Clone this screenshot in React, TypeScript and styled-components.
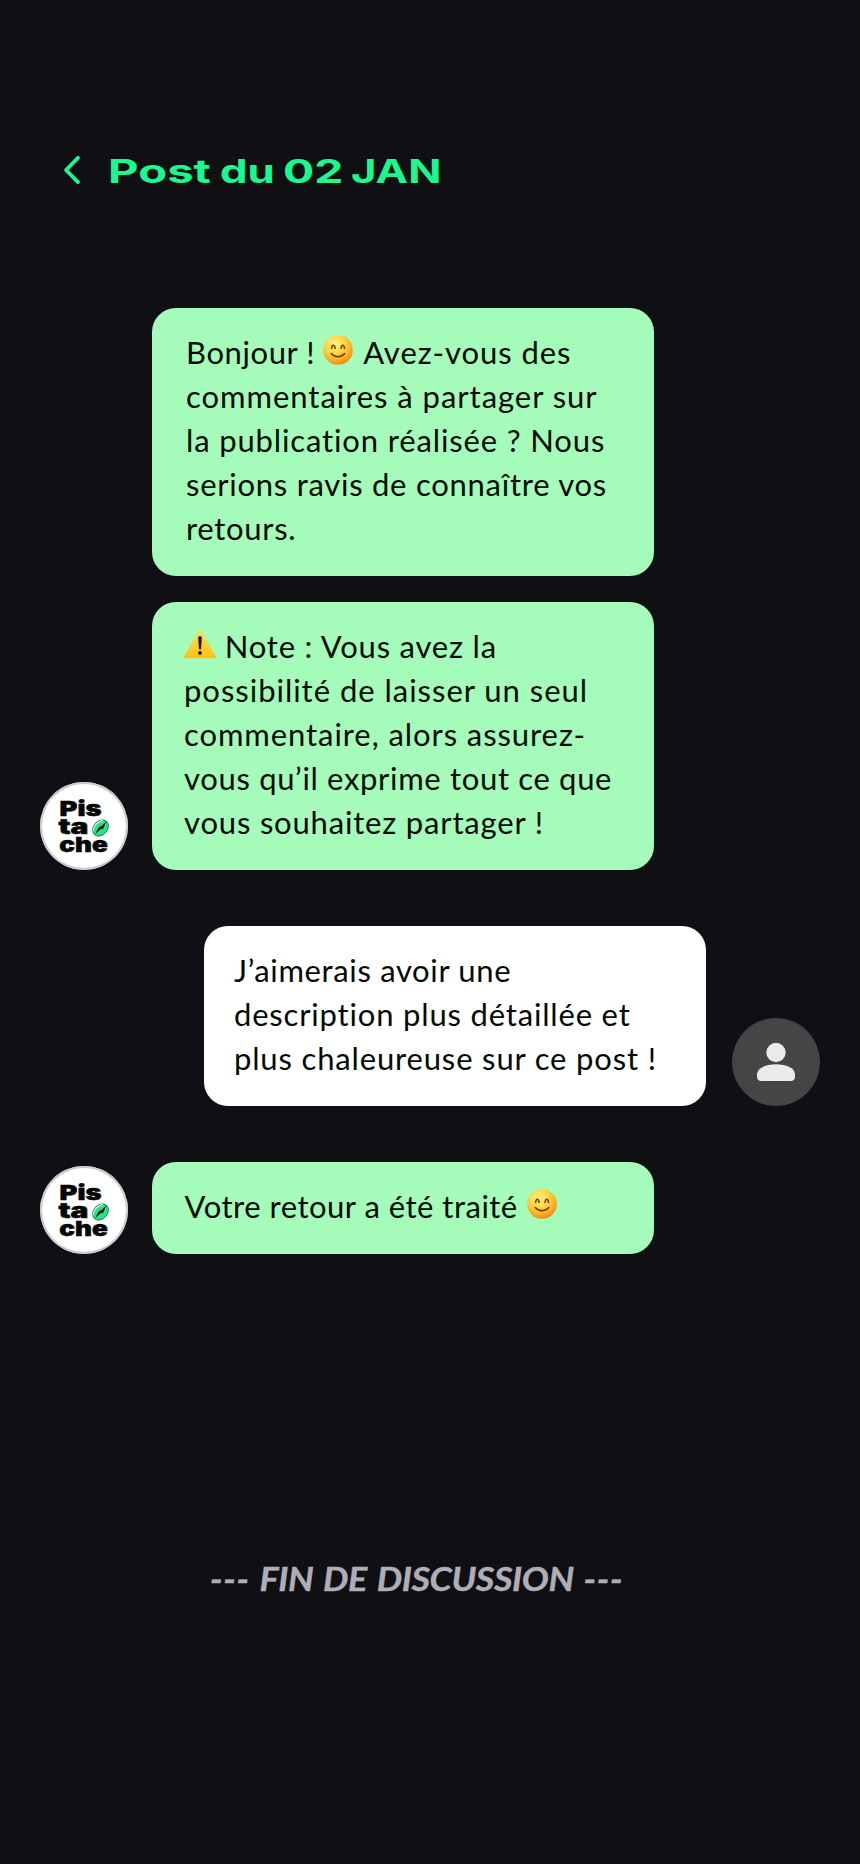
import React from "react";
import styled, { createGlobalStyle } from "styled-components";

const GlobalStyle = createGlobalStyle`
  *, *::before, *::after { box-sizing: border-box; }
  body { margin: 0; background: #100f14; }
`;

const Page = styled.main`
  width: 860px;
  height: 1864px;
  padding: 148px 40px 0;
  display: flex;
  flex-direction: column;
  background: #100f14;
  color: #020a04;
  font-family: Lato, "Noto Sans", sans-serif;
`;

const Header = styled.header`
  display: flex;
  align-items: center;
  height: 44px;
  padding-left: 22px;
  margin-bottom: 116px;
`;

const BackButton = styled.button`
  width: 20px;
  height: 32px;
  margin-right: 25.5px;
  padding: 0;
  border: 0;
  background: none;
  display: flex;
`;

const Title = styled.h1`
  display: flex;
  margin: 0;
  padding-top: 1px;
  color: #19f98f;
  font: 700 33px/44px Inter, sans-serif;
  white-space: pre;
`;

const Word = styled.span<{ $width: number; $stretch: number }>`
  width: ${(p) => p.$width}px;
  transform: scaleX(${(p) => p.$stretch});
  transform-origin: 0 50%;
`;

const Thread = styled.section`
  display: flex;
  flex-direction: column;
`;

const Row = styled.div<{ $mine?: boolean; $gap: number }>`
  display: flex;
  align-items: flex-end;
  justify-content: ${(p) => (p.$mine ? "flex-end" : "flex-start")};
  gap: ${(p) => (p.$mine ? 26 : 24)}px;
  margin-bottom: ${(p) => p.$gap}px;
`;

const AvatarSlot = styled.div`
  width: 88px;
  flex: none;
`;

const Avatar = styled.div<{ $user?: boolean }>`
  width: 88px;
  height: 88px;
  border-radius: 50%;
  overflow: hidden;
  background: ${(p) => (p.$user ? "#454547" : "#ffffff")};
  box-shadow: ${(p) => (p.$user ? "none" : "inset 0 0 0 2px #cbcbcd")};
`;

const Bubble = styled.div<{ $mine?: boolean; $inset: number }>`
  width: 502px;
  padding: 22px 0 26px ${(p) => p.$inset}px;
  border-radius: 24px;
  background: ${(p) => (p.$mine ? "#ffffff" : "#a4fbba")};
`;

const Line = styled.div`
  height: 44px;
  font-size: 31px;
  line-height: 44px;
  white-space: pre;
`;

const Run = styled.span<{ $track: number }>`
  letter-spacing: ${(p) => p.$track}px;
`;

const Glyph = styled.svg<{ $left?: number; $right?: number }>`
  display: inline-block;
  vertical-align: -1px;
  margin: 0 ${(p) => p.$right ?? 0}px 0 ${(p) => p.$left ?? 0}px;
`;

const Ending = styled.p`
  margin: 303px 0 0;
  padding-left: 169.5px;
  color: #afadb6;
  font: italic bold 31.5px/44px Lato, sans-serif;
  white-space: pre;
`;

const Stretched = styled.span`
  display: inline-block;
  transform: scaleX(1.14);
  transform-origin: 0 50%;
  word-spacing: 2px;
  letter-spacing: -0.35px;
  -webkit-text-stroke: 0.4px currentColor;
`;

const Dashes = styled.span`
  letter-spacing: 0.7px;
`;

function Smile({ id, left, right }: { id: string; left?: number; right?: number }) {
  return (
    <Glyph $left={left} $right={right} width="30" height="30" viewBox="0 0 30 30">
      <defs>
        <radialGradient id={id} cx="0.4" cy="0.3" r="0.72">
          <stop offset="0" stopColor="#fff07a" />
          <stop offset="0.4" stopColor="#ffdb4a" />
          <stop offset="0.75" stopColor="#ffb022" />
          <stop offset="1" stopColor="#f0861a" />
        </radialGradient>
      </defs>
      <circle cx="15" cy="15" r="14.8" fill={`url(#${id})`} />
      <g fill="none" stroke="#6f3b06" strokeLinecap="round" strokeWidth="1.6">
        <path d="M8.6 13.4c.5-4.2 2.9-4.2 3.5 0M18 13.4c.6-4.2 3-4.2 3.5 0" />
        <path d="M8.3 18.6c3.2 4.200 10.200 4.200 13.400 0" />
      </g>
    </Glyph>
  );
}

function Warning() {
  return (
    <Glyph width="32" height="29" viewBox="0 0 32 29">
      <defs>
        <linearGradient id="warn" x1="0" y1="0" x2="0" y2="1">
          <stop offset="0" stopColor="#ffdc5e" />
          <stop offset="1" stopColor="#ffc20f" />
        </linearGradient>
      </defs>
      <path d="M14.5 1.5q1.5-2.4 3 0L31.6 26q.9 2.2-1.4 2.3H1.8Q-.5 28.2 .4 26z" fill="url(#warn)" />
      <path d="M14.2 7.400q0-1.200 1.800-1.200t1.800 1.200l-.8 11.800h-2z" fill="#17150c" />
      <circle cx="16" cy="22.900" r="1.900" fill="#17150c" />
    </Glyph>
  );
}

function BrandAvatar() {
  return (
    <Avatar>
      <svg width="88" height="88" viewBox="0 0 88 88">
        <g fill="#050505" stroke="#050505" strokeWidth="0.5" fontFamily="Inter, sans-serif" fontWeight="900" fontSize="20.500">
          <text x="19.500" y="34" textLength="42" lengthAdjust="spacingAndGlyphs">Pis</text>
          <text x="18.500" y="52" textLength="30" lengthAdjust="spacingAndGlyphs">ta</text>
          <text x="19.300" y="70.200" textLength="48.500" lengthAdjust="spacingAndGlyphs">che</text>
        </g>
        <g transform="rotate(42 60.500 46)">
          <ellipse cx="60.500" cy="46" rx="7" ry="9" fill="#22e585" stroke="#15543a" strokeWidth="0.700" />
          <path d="M57 38.300q-4.600 7.700 0 15.400" fill="none" stroke="#ffffff" strokeWidth="1" />
          <path d="M60.500 37l2.500 8-1.500 1.500-1 7.500-1.800-8 1.200-1.500z" fill="#07150e" />
        </g>
      </svg>
    </Avatar>
  );
}

function UserAvatar() {
  return (
    <Avatar $user>
      <svg width="88" height="88" viewBox="0 0 88 88" fill="#ebebec">
        <circle cx="44" cy="34.500" r="9.700" />
        <path d="M25 56.500C25 50 34 46.300 44 46.300S63 50 63 56.500V58.500Q63 63 58.500 63H29.500Q25 63 25 58.500Z" />
      </svg>
    </Avatar>
  );
}

function TextLine({ track, children }: { track: number; children: string }) {
  return (
    <Line>
      <Run $track={track}>{children}</Run>
    </Line>
  );
}

export default function App() {
  return (
    <Page>
      <GlobalStyle />
      <Header>
        <BackButton aria-label="Retour">
          <svg width="20" height="32" viewBox="0 0 20 32" fill="none" stroke="#19f98f" strokeWidth="3.8" strokeLinecap="round" strokeLinejoin="round">
            <path d="M16 3.800L4 16L16 28.200" />
          </svg>
        </BackButton>
        <Title>
          <Word $width={112.5} $stretch={1.43}>Post </Word>
          <Word $width={62.5} $stretch={1.32}>du </Word>
          <Word $width={68.5} $stretch={1.4}>02 </Word>
          <Word $width={90} $stretch={1.32}>JAN</Word>
        </Title>
      </Header>

      <Thread>
        <Row $gap={26}>
          <AvatarSlot />
          <Bubble $inset={34}>
            <Line>
              <Run $track={0.6}>Bonjour ! </Run>
              <Smile id="smile-greeting" left={-0.5} right={2} />
              <Run $track={0.95}> Avez-vous des</Run>
            </Line>
            <TextLine track={0.96}>commentaires à partager sur</TextLine>
            <TextLine track={0.86}>la publication réalisée ? Nous</TextLine>
            <TextLine track={0.74}>serions ravis de connaître vos</TextLine>
            <TextLine track={0.7}>retours.</TextLine>
          </Bubble>
        </Row>
        <Row $gap={56}>
          <BrandAvatar />
          <Bubble $inset={32}>
            <Line>
              <Warning />
              <Run $track={0.8}> Note : Vous avez la</Run>
            </Line>
            <TextLine track={0.98}>possibilité de laisser un seul</TextLine>
            <TextLine track={0.92}>commentaire, alors assurez-</TextLine>
            <TextLine track={0.67}>vous qu’il exprime tout ce que</TextLine>
            <TextLine track={0.82}>vous souhaitez partager !</TextLine>
          </Bubble>
        </Row>
        <Row $mine $gap={56}>
          <Bubble $mine $inset={30}>
            <TextLine track={0.66}>J’aimerais avoir une</TextLine>
            <TextLine track={0.82}>description plus détaillée et</TextLine>
            <TextLine track={0.84}>plus chaleureuse sur ce post !</TextLine>
          </Bubble>
          <UserAvatar />
        </Row>
        <Row $gap={0}>
          <BrandAvatar />
          <Bubble $inset={32.5}>
            <Line>
              <Run $track={0.5}>Votre retour a été traité </Run>
              <Smile id="smile-done" left={0.5} />
            </Line>
          </Bubble>
        </Row>
      </Thread>

      <Ending>
        <Stretched>
          <Dashes>---</Dashes> FIN DE DISCUSSION <Dashes>---</Dashes>
        </Stretched>
      </Ending>
    </Page>
  );
}
